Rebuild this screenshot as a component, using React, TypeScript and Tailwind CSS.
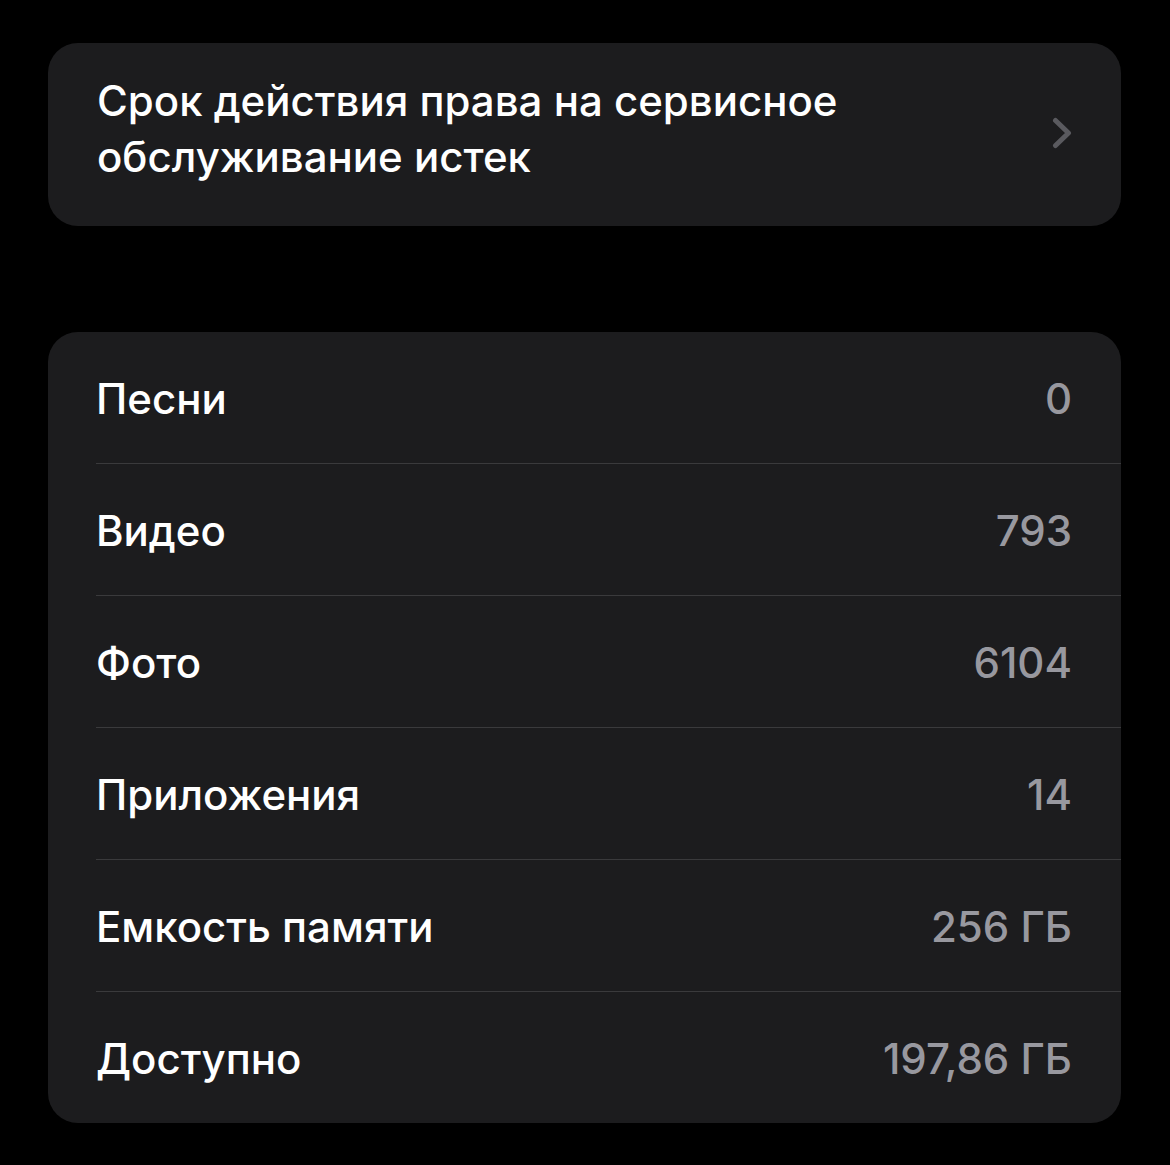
import React from 'react'

const rows = [
  { label: 'Песни', value: '0' },
  { label: 'Видео', value: '793' },
  { label: 'Фото', value: '6104' },
  { label: 'Приложения', value: '14' },
  { label: 'Емкость памяти', value: '256 ГБ' },
  { label: 'Доступно', value: '197,86 ГБ' },
]

const Chevron = () => (
  <svg width="20" height="32" viewBox="0 0 20 32" fill="none" className="shrink-0 mb-[3px]">
    <path d="M3.5 3.5 L16.5 16 L3.5 28.5" stroke="#5a5a5f" strokeWidth="5" strokeLinecap="round" strokeLinejoin="round" />
  </svg>
)

const App = () => {
  return (
    <div className="min-h-[1165px] w-full bg-black pt-[43px] pl-[48px] pr-[49px] pb-[42px] font-['Inter',sans-serif] antialiased">
      <div className="flex items-center h-[183px] rounded-[30px] bg-[#1c1c1e] pl-[49px] pr-[49px]">
        <p className="flex-1 pr-[60px] pb-[12px] text-[42px] leading-[56px] font-medium text-white">
          Срок действия права на сервисное обслуживание истек
        </p>
        <Chevron />
      </div>

      <div className="mt-[106px] rounded-[30px] bg-[#1c1c1e] pl-[48px]">
        {rows.map((row, i) => (
          <div
            key={row.label}
            className={
              i < rows.length - 1
                ? 'flex items-center justify-between h-[132px] pr-[49px] pt-[2px] border-b border-[#3a3a3c]'
                : 'flex items-center justify-between h-[131px] pr-[49px] pt-[2px]'
            }
          >
            <span className="text-[42px] font-medium text-white">{row.label}</span>
            <span className="text-[42px] font-medium text-[#98989f]">{row.value}</span>
          </div>
        ))}
      </div>
    </div>
  )
}

export default App
